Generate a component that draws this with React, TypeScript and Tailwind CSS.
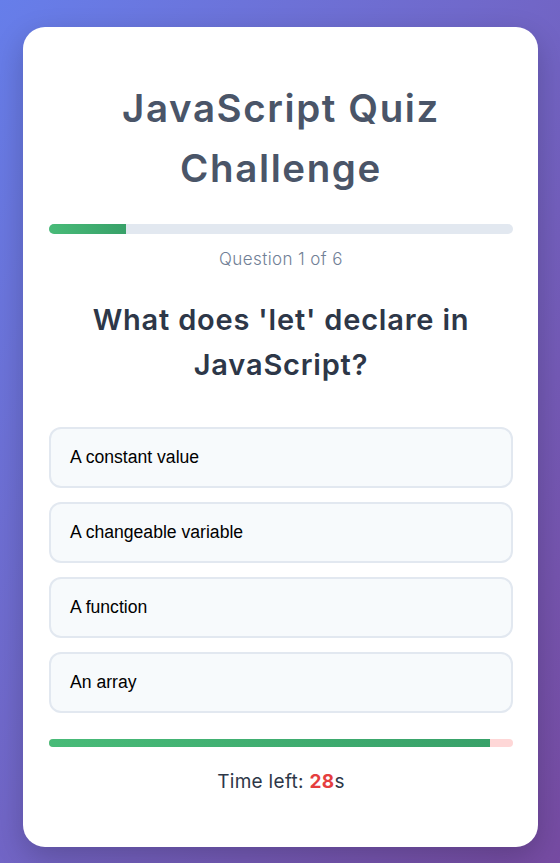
import React from "react";

const options = ["A constant value", "A changeable variable", "A function", "An array"];
const head = { fontFamily: "Inter, 'Noto Sans', sans-serif" };

export default function App() {
  return (
    <div className="min-h-[863px] bg-gradient-to-br from-[#667eea] to-[#764ba2] pt-[27px] pb-[16px] pl-[23px] pr-[22px]">
      <div className="bg-white rounded-[22px] pl-[26px] pr-[25px] pt-[25px] pb-[51px] shadow-[0_10px_30px_rgba(0,0,0,0.2)]">
        <h1
          className="mt-[26px] text-center text-[38.5px] leading-[60px] font-semibold tracking-[1.6px] text-[#4a5568]"
          style={head}
        >
          JavaScript Quiz
          <br />
          Challenge
        </h1>
        <div className="mt-[26px] h-[10px] w-full rounded-full bg-[#e2e8f0] overflow-hidden">
          <div className="h-full w-[16.67%] bg-gradient-to-r from-[#48bb78] to-[#38a169]" />
        </div>
        <p
          className="mt-[13px] text-center text-[17px] leading-[24px] font-light tracking-[0.4px] text-[#718096]"
          style={head}
        >
          Question 1 of 6
        </p>
        <h2
          className="mt-[26px] text-center text-[29px] leading-[45px] font-semibold tracking-[0.8px] text-[#2d3748] px-[20px]"
          style={head}
        >
          What does 'let' declare in JavaScript?
        </h2>
        <div className="mt-[40px] flex flex-col gap-[14px]">
          {options.map((o) => (
            <div
              key={o}
              className="h-[61px] flex items-center rounded-[12px] border-2 border-[#e2e8f0] bg-[#f7fafc] pl-[19px] text-[17.6px] text-black"
              style={{ fontFamily: "'Liberation Sans', Arial, sans-serif" }}
            >
              {o}
            </div>
          ))}
        </div>
        <div className="mt-[26px] h-[8px] w-full rounded-full bg-[#fed7d7] overflow-hidden">
          <div className="h-full w-[95%] bg-gradient-to-r from-[#48bb78] to-[#38a169]" />
        </div>
        <p
          className="mt-[21px] text-center text-[19px] leading-[28px] tracking-[0.3px] text-[#2d3748]"
          style={head}
        >
          Time left: <span className="font-bold text-[#e53e3e]">28</span>s
        </p>
      </div>
    </div>
  );
}
